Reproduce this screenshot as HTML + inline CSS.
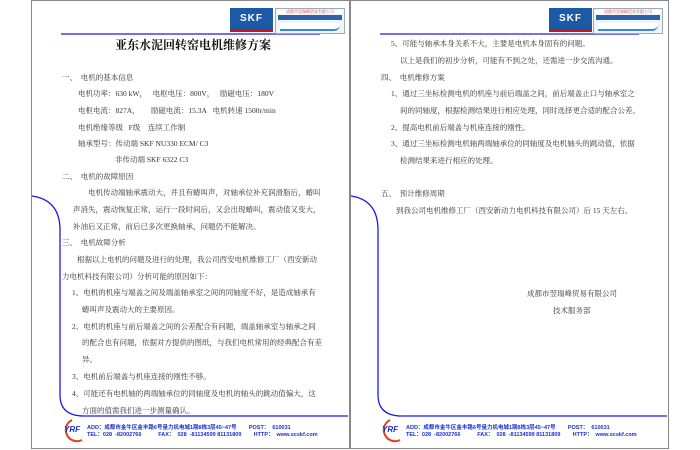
<!DOCTYPE html>
<html><head><meta charset="utf-8"><style>
*{margin:0;padding:0}
body{width:700px;height:450px;background:#fff;position:relative;overflow:hidden;font-family:"Liberation Serif","Noto Serif CJK SC","Noto Sans CJK SC",serif;color:#333}
.pg{position:absolute;top:0;height:447px;border:1px solid #888;border-top:1px solid #888;background:#fff}
.t{position:absolute;font-size:7.5px;line-height:9px;white-space:nowrap}
.h{position:absolute;font-size:12px;font-weight:bold;color:#111;white-space:nowrap}
.skf{position:absolute;width:43px;height:24px;background:#1c5aa6;color:#fff;font:bold 10px "Liberation Sans",sans-serif;text-align:center;line-height:21px;letter-spacing:1px}
.skf:after{content:"";position:absolute;left:0;right:0;bottom:0;height:3px;background:#c8141e}
.co{position:absolute;width:68px;height:24px;background:#eef4f8;border:1px solid #9ab}
.co .a{position:absolute;left:2px;right:2px;top:1px;height:4px;background:#fff;color:#c33;font-size:4px;line-height:4px;text-align:center}
.co .b{position:absolute;left:2px;right:2px;top:6px;height:5px;background:#2a62a8}
.co .c{position:absolute;left:4px;right:4px;top:14px;height:6px;background:#fff;border-bottom:2px solid #3a8ad0;border-radius:0 0 6px 0}
.ft{position:absolute;font:bold 5.5px "Liberation Sans","Noto Sans CJK SC",sans-serif;color:#1a2fd0;white-space:nowrap}
</style></head><body>
<div class="pg" style="left:31px;width:317px"></div>
<div class="pg" style="left:350px;width:317px"></div>
<svg width="700" height="450" style="position:absolute;left:0;top:0">
<g fill="none" stroke="#1a1aee" stroke-width="1.3">
<line x1="61" y1="34" x2="320" y2="34"/>
<path d="M32 196 Q60 200 60 230 L60 395 Q60 416 84 416 L348 416"/>
<line x1="380" y1="34" x2="639" y2="34"/>
<path d="M351 196 Q378 200 378 230 L378 395 Q378 416 402 416 L667 416"/>
</g>
<g fill="none" stroke="#e0401a" stroke-width="2">
<path d="M72 420 A11 11 0 1 0 82 440"/>
<path d="M390 420 A11 11 0 1 0 400 440"/>
</g>
</svg>
<div class="skf" style="left:230px;top:8px">SKF</div>
<div class="co" style="left:275px;top:8px"><div class="a">成都市翌瑞峰贸易有限公司</div><div class="b"></div><div class="c"></div></div>
<div class="skf" style="left:549px;top:8px">SKF</div>
<div class="co" style="left:593px;top:8px"><div class="a">成都市翌瑞峰贸易有限公司</div><div class="b"></div><div class="c"></div></div>

<div class="h" style="left:115px;top:36px">亚东水泥回转窑电机维修方案</div>
<div class="t" style="left:62px;top:73px">一、&nbsp; 电机的基本信息</div>
<div class="t" style="left:78px;top:89px">电机功率：630 kW，&nbsp;&nbsp; 电枢电压：800V，&nbsp;&nbsp; 励磁电压：180V</div>
<div class="t" style="left:78px;top:106px">电枢电流：827A，&nbsp;&nbsp;&nbsp;&nbsp;&nbsp; 励磁电流：15.3A&nbsp;&nbsp; 电机转速 1500r/min</div>
<div class="t" style="left:78px;top:123px">电机绝缘等级&nbsp;&nbsp; F级&nbsp;&nbsp;&nbsp; 连续工作制</div>
<div class="t" style="left:78px;top:139px">轴承型号：传动端 SKF NU330 ECM/ C3</div>
<div class="t" style="left:115px;top:155px">非传动端 SKF 6322 C3</div>
<div class="t" style="left:62px;top:172px">二、&nbsp; 电机的故障原因</div>
<div class="t" style="left:88px;top:188px">电机传动端轴承震动大，并且有蝽叫声，对轴承位补充润滑脂后，蝽叫</div>
<div class="t" style="left:73px;top:205px">声消失，震动恢复正常，运行一段时间后，又会出现蝽叫，震动值又变大，</div>
<div class="t" style="left:73px;top:222px">补油后又正常，前后已多次更换轴承，问题仍不能解决。</div>
<div class="t" style="left:62px;top:238px">三、&nbsp; 电机故障分析</div>
<div class="t" style="left:77px;top:255px">根据以上电机的问题及进行的处理，我公司西安电机维修工厂（西安新动</div>
<div class="t" style="left:62px;top:272px">力电机科技有限公司）分析可能的原因如下：</div>
<div class="t" style="left:72px;top:288px">1、电机的机座与端盖之间及端盖轴承室之间的同轴度不好，是造成轴承有</div>
<div class="t" style="left:82px;top:305px">蝽叫声及震动大的主要原因。</div>
<div class="t" style="left:72px;top:322px">2、电机的机座与前后端盖之间的公差配合有问题，端盖轴承室与轴承之间</div>
<div class="t" style="left:82px;top:338px">的配合也有问题，依据对方提供的图纸，与我们电机常用的经典配合有差</div>
<div class="t" style="left:82px;top:355px">异。</div>
<div class="t" style="left:72px;top:372px">3、电机前后端盖与机座连接的刚性不够。</div>
<div class="t" style="left:72px;top:389px">4、可能还有电机轴的两端轴承位的同轴度及电机的轴头的跳动值偏大，这</div>
<div class="t" style="left:82px;top:406px">方面的值需我们进一步测量确认。</div>

<div class="t" style="left:391px;top:39px">5、可能与轴承本身关系不大，主要是电机本身固有的问题。</div>
<div class="t" style="left:400px;top:56px">以上是我们的初步分析，可能有不到之处，还需进一步交流沟通。</div>
<div class="t" style="left:381px;top:73px">四、&nbsp; 电机维修方案</div>
<div class="t" style="left:391px;top:89px">1、通过三坐标检测电机的机座与前后端盖之间，前后端盖止口与轴承室之</div>
<div class="t" style="left:400px;top:106px">间的同轴度，根据检测结果进行相应处理，同时选择更合适的配合公差。</div>
<div class="t" style="left:391px;top:123px">2、提高电机前后端盖与机座连接的刚性。</div>
<div class="t" style="left:391px;top:139px">3、通过三坐标检测电机轴两端轴承位的同轴度及电机轴头的跳动值，依据</div>
<div class="t" style="left:400px;top:156px">检测结果来进行相应的处理。</div>
<div class="t" style="left:381px;top:189px">五、&nbsp; 预计维修周期</div>
<div class="t" style="left:396px;top:206px">到我公司电机维修工厂（西安新动力电机科技有限公司）后 15 天左右。</div>
<div class="t" style="left:527px;top:289px">成都市翌瑞峰贸易有限公司</div>
<div class="t" style="left:553px;top:306px">技术服务部</div>

<div class="ft" style="left:64px;top:425px;color:#1a2fd0;font-size:8px;font-style:italic">YRF</div>
<div class="ft" style="left:87px;top:423px">ADD：成都市金牛区金丰路6号量力机电城1期8栋3层45~47号&nbsp;&nbsp;&nbsp;&nbsp;&nbsp;&nbsp;&nbsp; POST：&nbsp; 610031</div>
<div class="ft" style="left:87px;top:430px">TEL：028&nbsp; -82002766&nbsp;&nbsp;&nbsp;&nbsp;&nbsp;&nbsp;&nbsp;&nbsp;&nbsp;&nbsp; FAX：&nbsp; 028&nbsp; -81134599 81131809&nbsp;&nbsp;&nbsp;&nbsp;&nbsp;&nbsp;&nbsp; HTTP：&nbsp; www.scskf.com</div>
<div class="ft" style="left:382px;top:425px;font-size:8px;font-style:italic">YRF</div>
<div class="ft" style="left:406px;top:423px">ADD：成都市金牛区金丰路6号量力机电城1期8栋3层45~47号&nbsp;&nbsp;&nbsp;&nbsp;&nbsp;&nbsp;&nbsp; POST：&nbsp; 610031</div>
<div class="ft" style="left:406px;top:430px">TEL：028&nbsp; -82002766&nbsp;&nbsp;&nbsp;&nbsp;&nbsp;&nbsp;&nbsp;&nbsp;&nbsp;&nbsp; FAX：&nbsp; 028&nbsp; -81134599 81131809&nbsp;&nbsp;&nbsp;&nbsp;&nbsp;&nbsp;&nbsp; HTTP：&nbsp; www.scskf.com</div>
</body></html>
